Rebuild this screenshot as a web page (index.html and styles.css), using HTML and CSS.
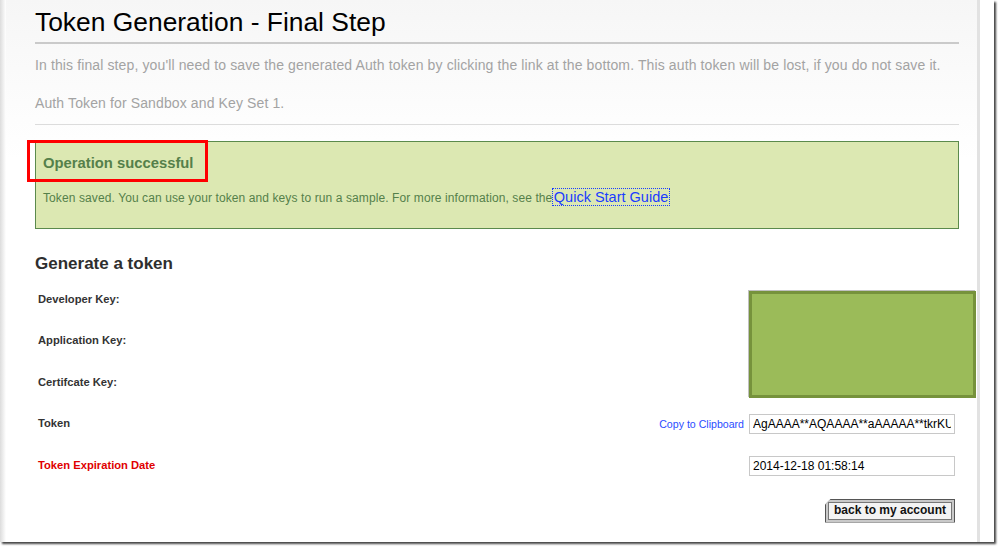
FILE: index.html
```
<!DOCTYPE html>
<html lang="en">
<head>
	<meta charset="UTF-8">
	<title>Token Generation - Final Step</title>
	<link rel="stylesheet" href="styles.css">
</head>
<body>
	<div class="shot">
		<div class="page">
			<div class="content">
				<h1 class="title">Token Generation - Final Step</h1>
				<p class="intro">In this final step, you'll need to save the generated Auth token by clicking the link at the bottom. This auth token will be lost, if you do not save it.</p>
				<p class="intro">Auth Token for Sandbox and Key Set 1.</p>
				<div class="thin-rule"></div>

				<div class="success">
					<h3>Operation successful</h3>
					<p>Token saved. You can use your token and keys to run a sample. For more information, see the <a href="javascript:;" class="guide">Quick Start Guide</a></p>
					<div class="mark-red"></div>
				</div>

				<h2 class="gen">Generate a token</h2>
				<div class="form">
					<div class="row">
						<span class="label">Developer Key:</span>
						<span class="field"><input type="text" value=""></span>
					</div>
					<div class="row">
						<span class="label">Application Key:</span>
						<span class="field"><input type="text" value=""></span>
					</div>
					<div class="row">
						<span class="label">Certifcate Key:</span>
						<span class="field"><input type="text" value=""></span>
					</div>
					<div class="row">
						<span class="label">Token</span>
						<span class="field"><a href="javascript:;" class="copy">Copy to Clipboard</a><input type="text" value="AgAAAA**AQAAAA**aAAAAA**tkrKUQ**nY+sHZ2PrBmdj6wVnY+sEZ2PrA2dj6wFk4GhCZOEpQSdj6x9nY+seQ**"></span>
					</div>
					<div class="row">
						<span class="label expire">Token Expiration Date</span>
						<span class="field"><input type="text" value="2014-12-18 01:58:14"></span>
					</div>
					<div class="mark-green"></div>
				</div>
				<div class="actions">
					<a href="javascript:;" class="back">back to my account</a>
				</div>
			</div>
		</div>
	</div>
</body>
</html>
```

FILE: styles.css
```
*{
	padding:0;
	margin:0;
	box-sizing:border-box;
}
body{
	width:998px;
	height:547px;
	overflow:hidden;
	background:#fff;
	font-family:"Liberation Sans",Arial,sans-serif;
}
.shot{
	width:994px;
	height:542px;
	background:#fff;
	box-shadow:2px 2px 2px #444;
	overflow:hidden;
}
.page{
	width:980px;
	height:542px;
	border-right:3px solid #e2e2e2;
	background:linear-gradient(to bottom,#f6f6f6 0,#fdfdfd 120px,#fff 160px);
	position:relative;
}
.page:before{
	content:"";
	position:absolute;
	left:0;
	top:0;
	bottom:0;
	width:6px;
	background:linear-gradient(to right,#dcdcdc,#fff);
}
.content{
	margin-left:35px;
	width:924px;
	padding-top:7px;
}
.title{
	font-size:26.4px;
	font-weight:normal;
	color:#000;
	line-height:30px;
	padding-bottom:5px;
	border-bottom:2px solid #cacaca;
}
.intro{
	font-size:14px;
	letter-spacing:0.12px;
	color:#a3a3a3;
	line-height:17px;
	margin-top:13px;
}
.intro + .intro{
	margin-top:21px;
}
.thin-rule{
	height:1px;
	background:#dcdcdc;
	margin-top:12px;
}
.success{
	position:relative;
	margin-top:16px;
	height:88px;
	border:1px solid #5b8a4c;
	background:#dce8b2;
	color:#55804a;
	padding:13px 0 0 7px;
}
.success h3{
	font-size:14.8px;
	font-weight:bold;
	line-height:17px;
}
.success p{
	font-size:12px;
	letter-spacing:0.1px;
	line-height:18px;
	margin-top:16px;
}
.guide{
	color:#1a3cff;
	font-size:14.5px;
	letter-spacing:0;
	text-decoration:none;
	outline:1px dotted #1a3cff;
	padding:0 1px;
	margin-left:-3px;
}
.mark-red{
	position:absolute;
	left:-9px;
	top:-2px;
	width:181px;
	height:42px;
	border:3px solid #f00;
}
.gen{
	font-size:17px;
	font-weight:bold;
	color:#2e2e2e;
	margin-top:25px;
	line-height:20px;
}
.form{
	position:relative;
	margin-top:4px;
}
.row{
	display:flex;
	align-items:center;
	justify-content:space-between;
	height:41.5px;
	padding-left:3px;
}
.label{
	font-size:11.2px;
	font-weight:bold;
	color:#333;
}
.label.expire{
	color:#e00000;
}
.field{
	display:flex;
	align-items:center;
	gap:5px;
	margin-right:4px;
	margin-top:2px;
}
.field input{
	width:206px;
	height:20px;
	border:1px solid #c8c8c8;
	padding:0 3px;
	font-family:"Liberation Sans",Arial,sans-serif;
	font-size:12px;
	color:#000;
	background:#fff;
}
.copy{
	font-size:10.6px;
	color:#2b4dff;
	text-decoration:none;
}
.mark-green{
	position:absolute;
	left:714px;
	top:13px;
	width:227px;
	height:107px;
	background:#9bbb59;
	border:3px solid #76923c;
	box-shadow:-1px -1px 0 #c0c0c0;
}
.actions{
	display:flex;
	justify-content:flex-end;
	margin-top:13px;
	margin-right:4px;
}
.back{
	display:block;
	width:130px;
	height:24px;
	line-height:21px;
	text-align:center;
	font-size:12px;
	font-weight:bold;
	color:#111;
	text-decoration:none;
	border:1px solid #555;
	background:#f3f3f3;
	box-shadow:inset 0 0 0 2px #c9c9c9,inset 0 0 0 3px #777;
	clip-path:polygon(6px 0,100% 0,100% 100%,0 100%,0 6px);
}
```
